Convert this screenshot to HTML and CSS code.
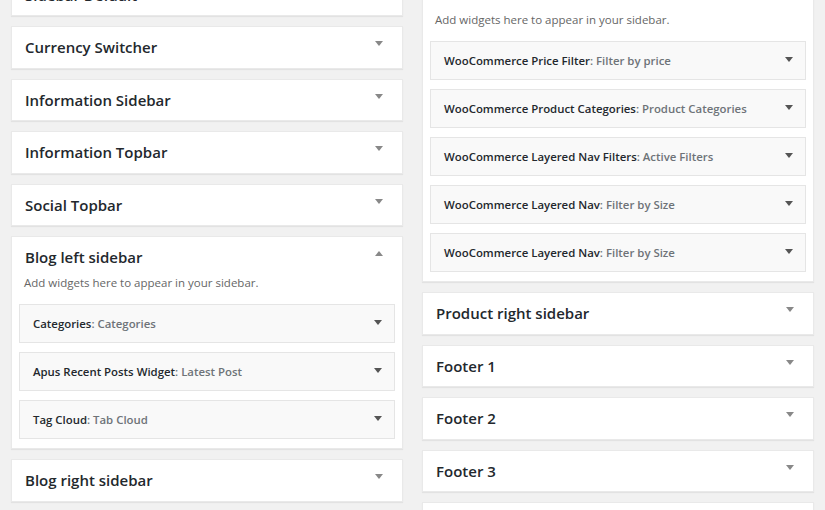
FILE: index.html
```html
<!DOCTYPE html>
<html>
<head>
<meta charset="utf-8">
<link rel="stylesheet" href="styles.css">
</head>
<body>
<div class="page">
  <div class="col col-left">
    <div class="box"><div class="box-head"><h2>Sidebar Default</h2><span class="arrow down"></span></div></div>
    <div class="box"><div class="box-head"><h2>Currency Switcher</h2><span class="arrow down"></span></div></div>
    <div class="box"><div class="box-head"><h2>Information Sidebar</h2><span class="arrow down"></span></div></div>
    <div class="box"><div class="box-head"><h2>Information Topbar</h2><span class="arrow down"></span></div></div>
    <div class="box"><div class="box-head"><h2>Social Topbar</h2><span class="arrow down"></span></div></div>
    <div class="box open">
      <div class="box-head"><h2>Blog left sidebar</h2><span class="arrow up"></span></div>
      <p class="desc">Add widgets here to appear in your sidebar.</p>
      <div class="widgets">
        <div class="widget"><h3>Categories<span class="sub">: Categories</span></h3><span class="arrow wdown"></span></div>
        <div class="widget"><h3>Apus Recent Posts Widget<span class="sub">: Latest Post</span></h3><span class="arrow wdown"></span></div>
        <div class="widget"><h3>Tag Cloud<span class="sub">: Tab Cloud</span></h3><span class="arrow wdown"></span></div>
      </div>
    </div>
    <div class="box"><div class="box-head"><h2>Blog right sidebar</h2><span class="arrow down"></span></div></div>
  </div>
  <div class="col col-right">
    <div class="box open">
      <div class="box-head"><h2>Product left sidebar</h2><span class="arrow up"></span></div>
      <p class="desc">Add widgets here to appear in your sidebar.</p>
      <div class="widgets">
        <div class="widget"><h3>WooCommerce Price Filter<span class="sub">: Filter by price</span></h3><span class="arrow wdown"></span></div>
        <div class="widget"><h3>WooCommerce Product Categories<span class="sub">: Product Categories</span></h3><span class="arrow wdown"></span></div>
        <div class="widget"><h3>WooCommerce Layered Nav Filters<span class="sub">: Active Filters</span></h3><span class="arrow wdown"></span></div>
        <div class="widget"><h3>WooCommerce Layered Nav<span class="sub">: Filter by Size</span></h3><span class="arrow wdown"></span></div>
        <div class="widget"><h3>WooCommerce Layered Nav<span class="sub">: Filter by Size</span></h3><span class="arrow wdown"></span></div>
      </div>
    </div>
    <div class="box"><div class="box-head"><h2>Product right sidebar</h2><span class="arrow down"></span></div></div>
    <div class="box"><div class="box-head"><h2>Footer 1</h2><span class="arrow down"></span></div></div>
    <div class="box"><div class="box-head"><h2>Footer 2</h2><span class="arrow down"></span></div></div>
    <div class="box"><div class="box-head"><h2>Footer 3</h2><span class="arrow down"></span></div></div>
    <div class="box"><div class="box-head"></div></div>
  </div>
</div>
</body>
</html>
```
FILE: styles.css
```css
html, body {
  margin: 0;
  padding: 0;
  background: #f1f1f1;
  overflow: hidden;
  height: 510px;
}
body {
  font-family: "Open Sans", "Noto Sans", sans-serif;
  color: #23282d;
}
.page {
  display: flex;
  gap: 19px;
  padding: 0 11px;
}
.col {
  flex: 1;
  display: flex;
  flex-direction: column;
  gap: 10px;
}
.col-left { margin-top: -26.5px; }
.col-right { margin-top: -27px; }
.box {
  background: #fff;
  box-shadow: 0 1px 1px rgba(0,0,0,0.06);
  border: 1px solid #e9e9e9;
}
.box-head {
  position: relative;
  height: 40.5px;
  display: flex;
  align-items: center;
  padding: 0 13px;
}
.box-head h2 {
  margin: 0;
  font-size: 15px;
  font-weight: 600;
  color: #23282d;
}
.desc {
  margin: -2px 12px 0;
  font-size: 11.5px;
  color: #666;
  line-height: 14px;
}
.widgets {
  display: flex;
  flex-direction: column;
  gap: 9px;
  padding: 14.5px 7px 9px;
}
.widget {
  position: relative;
  height: 37px;
  background: #f9f9f9;
  border: 1px solid #e5e5e5;
  display: flex;
  align-items: center;
  padding: 0 13px;
}
.widget h3 {
  margin: 0;
  font-size: 11.4px;
  font-weight: 600;
  color: #23282d;
}
.widget .sub { color: #6e7378; }
.arrow {
  position: absolute;
  width: 0;
  height: 0;
  border-left: 4px solid transparent;
  border-right: 4px solid transparent;
}
.arrow.down {
  right: 19px;
  top: 14px;
  border-top: 5px solid #888;
}
.arrow.up {
  right: 19px;
  top: 14px;
  border-bottom: 5px solid #888;
}
.arrow.wdown {
  right: 12px;
  top: 15px;
  border-top: 5px solid #555;
}
```
